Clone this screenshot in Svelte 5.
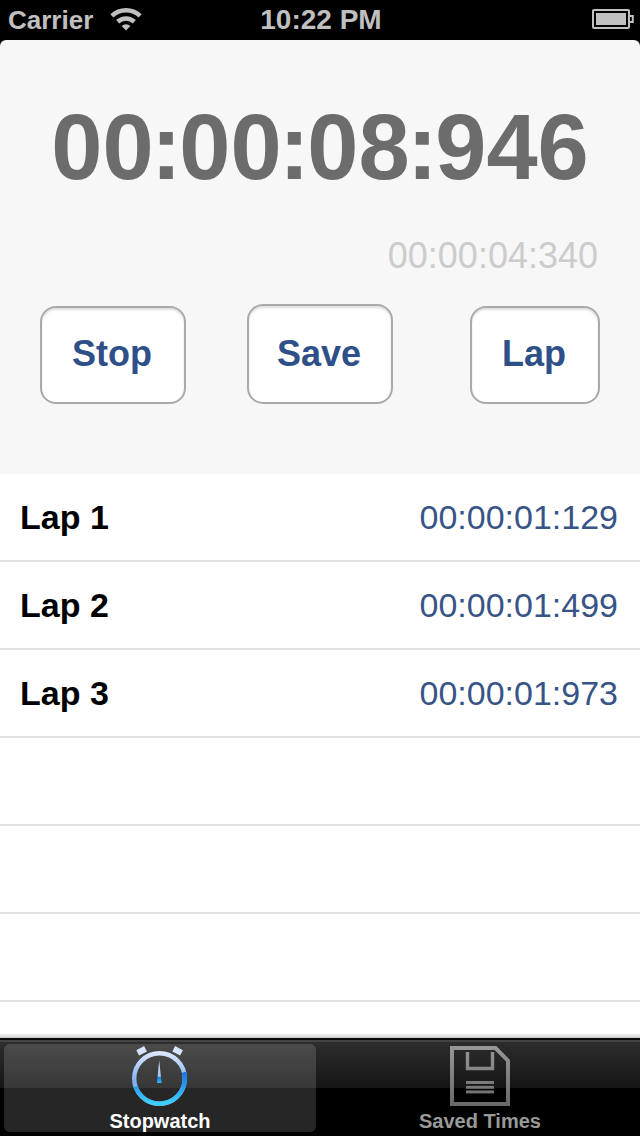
<script>
	let elapsed = '00:00:08:946';
	let lapElapsed = '00:00:04:340';

	const laps = [
		{ label: 'Lap 1', time: '00:00:01:129' },
		{ label: 'Lap 2', time: '00:00:01:499' },
		{ label: 'Lap 3', time: '00:00:01:973' }
	];
	const emptyRows = [1, 2, 3, 4];

	let activeTab = 'stopwatch';
</script>

<div class="screen">
	<header class="status-bar">
		<div class="carrier">
			<span class="carrier-name">Carrier</span>
			<svg class="wifi" width="32" height="24" viewBox="0 0 32 24">
				<g fill="none" stroke="#c0c0c0" stroke-width="4.6">
					<path d="M1.9 8.9 A20.5 20.5 0 0 1 30.1 8.9" />
					<path d="M7.7 14.8 A12.2 12.2 0 0 1 24.3 14.8" />
				</g>
				<path d="M11.6 19 A6.4 6.4 0 0 1 20.4 19 L16 23.6 Z" fill="#c0c0c0" />
			</svg>
		</div>
		<span class="clock">10:22 PM</span>
		<svg class="battery" width="42" height="20" viewBox="0 0 42 20">
			<rect x="1" y="1" width="36" height="18" rx="1" fill="none" stroke="#c0c0c0" stroke-width="2" />
			<rect x="4" y="4" width="30" height="12" fill="#c0c0c0" />
			<path d="M38 7 h2.8 v6 h-2.8" fill="none" stroke="#c0c0c0" stroke-width="2" />
		</svg>
	</header>

	<section class="timer">
		<div class="elapsed">
			{#each elapsed.split('') as char}<span class:colon={char === ':'}>{char}</span>{/each}
		</div>
		<div class="lap-elapsed">{lapElapsed}</div>
		<div class="buttons">
			<button class="stop">Stop</button>
			<button class="save">Save</button>
			<button class="lap">Lap</button>
		</div>
	</section>

	<ul class="laps">
		{#each laps as lap}
			<li>
				<span class="lap-label">{lap.label}</span>
				<span class="lap-time">{lap.time}</span>
			</li>
		{/each}
		{#each emptyRows as row}
			<li></li>
		{/each}
	</ul>

	<nav class="tab-bar">
		<button class="tab" class:active={activeTab === 'stopwatch'} on:click={() => (activeTab = 'stopwatch')}>
			<svg width="64" height="64" viewBox="0 0 64 64">
				<defs>
					<linearGradient id="ring-top" x1="0" y1="0" x2="0" y2="1">
						<stop offset="0" stop-color="#dbe6fb" />
						<stop offset="0.55" stop-color="#7fb2f0" />
						<stop offset="1" stop-color="#7fb2f0" />
					</linearGradient>
					<linearGradient id="ring-bottom" x1="0" y1="0" x2="0" y2="1">
						<stop offset="0" stop-color="#1672e6" />
						<stop offset="1" stop-color="#40d0fc" />
					</linearGradient>
					<linearGradient id="needle" x1="0" y1="0" x2="0" y2="1">
						<stop offset="0" stop-color="#e4edfc" />
						<stop offset="0.7" stop-color="#9cc4f4" />
						<stop offset="0.75" stop-color="#1c85ea" />
						<stop offset="1" stop-color="#36b4f8" />
					</linearGradient>
				</defs>
				<g fill="#d8e4fa">
					<rect x="-4.4" y="-3" width="8.8" height="6" transform="translate(13.6 6.8) rotate(-28)" />
					<rect x="-4.4" y="-3" width="8.8" height="6" transform="translate(49.6 6.8) rotate(28)" />
				</g>
				<circle cx="31.5" cy="34.5" r="25.3" fill="none" stroke="url(#ring-top)" stroke-width="4.4" />
				<path
					d="M56 28.2 A25.3 25.3 0 0 1 56.8 34.5 A25.3 25.3 0 0 1 7.6 42.6"
					fill="none"
					stroke="url(#ring-bottom)"
					stroke-width="4.4"
				/>
				<path d="M31.2 16.5 L33.6 39 H29 Z" fill="url(#needle)" />
			</svg>
			<span>Stopwatch</span>
		</button>
		<button class="tab" class:active={activeTab === 'saved'} on:click={() => (activeTab = 'saved')}>
			<svg width="64" height="64" viewBox="0 0 64 64">
				<defs>
					<linearGradient id="disk" gradientUnits="userSpaceOnUse" x1="0" y1="2" x2="0" y2="62">
						<stop offset="0" stop-color="#989898" />
						<stop offset="1" stop-color="#686868" />
					</linearGradient>
				</defs>
				<g fill="none" stroke="url(#disk)">
					<path d="M4 4 H47.5 L60 16.7 V60 H4 Z" stroke-width="4" />
					<path d="M19.5 8 V24.5 H44.5 V8" stroke-width="3.4" />
				</g>
				<g fill="url(#disk)">
					<rect x="18" y="37" width="28" height="3" />
					<rect x="18" y="41.8" width="28" height="3" />
					<rect x="18" y="46.4" width="28" height="3" />
				</g>
			</svg>
			<span>Saved Times</span>
		</button>
	</nav>
</div>

<style>
	:global(body) {
		margin: 0;
		background: #000;
	}

	.screen {
		display: flex;
		flex-direction: column;
		width: 640px;
		height: 1136px;
		overflow: hidden;
		background: #000;
		font-family: 'Liberation Sans', Arial, sans-serif;
	}

	button {
		font-family: inherit;
		font-weight: bold;
		padding: 0;
		cursor: pointer;
	}

	.status-bar {
		display: grid;
		grid-template-columns: 1fr auto 1fr;
		align-items: center;
		flex: none;
		box-sizing: border-box;
		height: 40px;
		padding: 0 6px 2px 8px;
		color: #c0c0c0;
		font-weight: bold;
	}

	.carrier {
		display: flex;
		align-items: center;
		gap: 17px;
	}

	.carrier-name {
		padding-top: 2px;
		font-size: 26px;
		line-height: 36px;
	}

	.clock {
		padding-top: 2px;
		font-size: 28px;
		line-height: 36px;
	}

	.battery {
		justify-self: end;
	}

	.timer {
		flex: none;
		box-sizing: border-box;
		height: 434px;
		padding-top: 54px;
		background: #f7f7f7;
		border-radius: 6px 6px 0 0;
	}

	.elapsed {
		display: flex;
		justify-content: center;
		font-size: 92px;
		line-height: 106px;
		font-weight: bold;
		color: #6c6c6c;
	}

	.colon {
		margin: 0 -2.5px;
	}

	.lap-elapsed {
		padding: 35px 42px 0 0;
		font-size: 36px;
		line-height: 42px;
		text-align: right;
		color: #ccc;
	}

	.buttons {
		display: flex;
		justify-content: space-between;
		align-items: flex-end;
		height: 100px;
		padding: 27px 40px 0;
	}

	.buttons button {
		box-sizing: border-box;
		width: 146px;
		height: 98px;
		padding: 0 2px 2px 0;
		border: 2px solid #aaa;
		border-radius: 16px;
		background: #fff;
		box-shadow: inset 0 2px 2px #e0e0e0;
		color: #2f4f88;
		font-size: 36px;
	}

	.buttons .save {
		height: 100px;
		margin-left: -16px;
		padding-bottom: 0;
	}

	.buttons .lap {
		width: 130px;
	}

	.laps {
		flex: 1;
		min-height: 0;
		margin: 0;
		padding: 0;
		overflow: hidden;
		list-style: none;
		background: linear-gradient(to top, #c8c8c8, #fff 5px);
	}

	.laps li {
		display: flex;
		justify-content: space-between;
		align-items: center;
		box-sizing: border-box;
		height: 88px;
		padding: 0 22px 0 20px;
		border-bottom: 2px solid #e0e0e0;
		font-size: 34px;
	}

	.lap-label {
		font-weight: bold;
		color: #000;
	}

	.lap-time {
		color: #385487;
	}

	.tab-bar {
		display: grid;
		grid-template-columns: 312px 312px;
		gap: 8px;
		flex: none;
		box-sizing: border-box;
		height: 98px;
		padding: 4px 4px 4px;
		border-top: 2px solid #080808;
		background: linear-gradient(#434343 0 2px, #2d2d2d 2px, #151515 48px, #000 48px);
	}

	.tab {
		display: flex;
		flex-direction: column;
		align-items: center;
		height: 88px;
		border: none;
		border-radius: 6px;
		background: none;
		color: #999;
		font-size: 20px;
	}

	.tab svg {
		display: block;
		flex: none;
	}

	.tab span {
		line-height: 24px;
		margin-top: 1px;
	}

	.tab.active {
		background: rgba(255, 255, 255, 0.15);
		color: #fff;
	}
</style>
